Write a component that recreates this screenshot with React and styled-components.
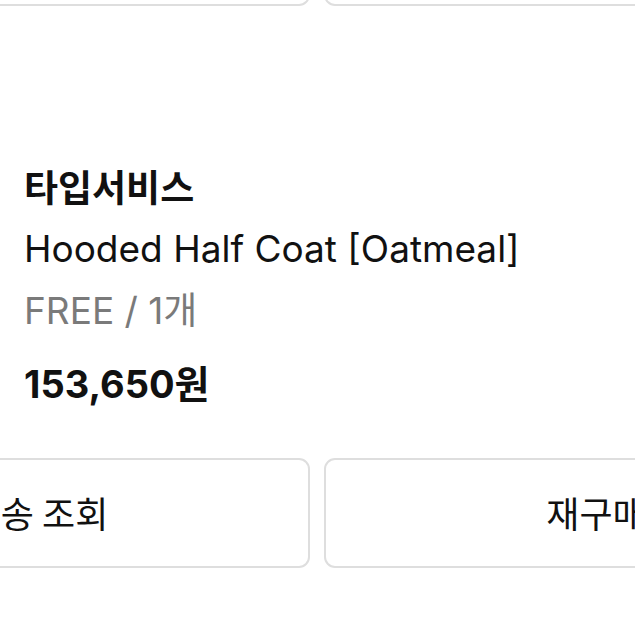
import styled, { createGlobalStyle } from 'styled-components';

const GlobalStyle = createGlobalStyle`
  body {
    margin: 0;
    background: #fff;
    overflow: hidden;
    font-family: 'Inter', 'Noto Sans CJK KR', sans-serif;
    color: #111;
  }
`;

const Screen = styled.div`
  width: 635px;
  height: 635px;
  overflow: hidden;
  display: flex;
  flex-direction: column;
`;

const ButtonRow = styled.div`
  display: grid;
  grid-template-columns: 544px 544px;
  gap: 14px;
  margin-left: -234px;
  margin-top: ${(p) => p.$offset || 0}px;
`;

const ActionButton = styled.button`
  height: 110px;
  border: 2px solid #dedede;
  border-radius: 11px;
  background: #fff;
  font-family: 'Noto Sans CJK KR', sans-serif;
  font-size: 36px;
  color: #111;
  padding: 0 0 2px;
`;

const Info = styled.div`
  padding: 150px 24px 0;
  display: flex;
  flex-direction: column;
`;

const Brand = styled.div`
  font-family: 'Noto Sans CJK KR', sans-serif;
  font-weight: 700;
  font-size: 37px;
  line-height: 60px;
`;

const ProductName = styled.div`
  font-size: 37px;
  line-height: 60px;
  margin-top: 3px;
`;

const Option = styled.div`
  font-size: 37px;
  line-height: 60px;
  margin-top: 2px;
  color: #7a7a7a;
`;

const Price = styled.div`
  font-size: 38px;
  font-weight: 700;
  line-height: 60px;
  margin-top: 13px;
`;

const Bottom = styled.div`
  margin-top: 44px;
`;

export default function App() {
  return (
    <Screen>
      <GlobalStyle />
      <ButtonRow $offset={-104}>
        <ActionButton>배송 조회</ActionButton>
        <ActionButton>재구매</ActionButton>
      </ButtonRow>
      <Info>
        <Brand>타입서비스</Brand>
        <ProductName>Hooded Half Coat [Oatmeal]</ProductName>
        <Option>FREE / 1개</Option>
        <Price>153,650원</Price>
      </Info>
      <Bottom>
        <ButtonRow>
          <ActionButton>배송 조회</ActionButton>
          <ActionButton>재구매</ActionButton>
        </ButtonRow>
      </Bottom>
    </Screen>
  );
}
